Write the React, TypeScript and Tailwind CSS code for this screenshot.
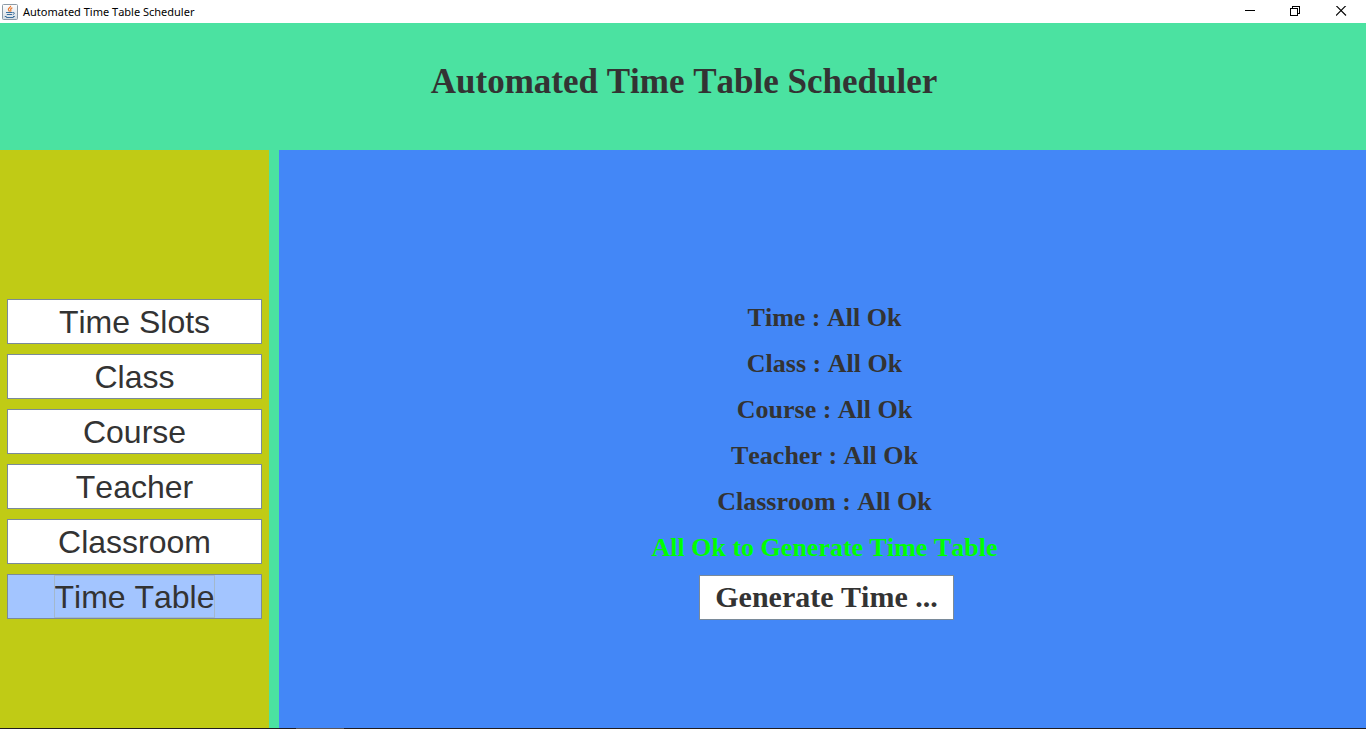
const sections = ["Time Slots", "Class", "Course", "Teacher", "Classroom", "Time Table"];

const checks = [
  "Time : All Ok",
  "Class : All Ok",
  "Course : All Ok",
  "Teacher : All Ok",
  "Classroom : All Ok",
];

function JavaIcon() {
  return (
    <svg width="16" height="16" viewBox="0 0 16 16" fill="none" aria-hidden="true">
      <defs>
        <linearGradient id="tile" x1="0" y1="0" x2="0" y2="1">
          <stop offset="0" stopColor="#ffffff" />
          <stop offset="1" stopColor="#d3dbe2" />
        </linearGradient>
      </defs>
      <rect x="0.5" y="0.5" width="15" height="15" rx="1" fill="url(#tile)" stroke="#8c9aa6" />
      <path d="M8.6 1.8C9.2 3.4 5.8 4 6.4 5.6C6.6 6.3 7.3 6.8 7.4 7.6M10.4 3.8C8.8 4.5 8.4 5.3 8.8 6.1C9 6.6 8.9 7.1 8.5 7.6" stroke="#e8782c" strokeWidth="1.2" />
      <path d="M4 8.5H10.6M4.8 10.5H10M10.8 8.6C12.8 8.1 13 9.8 10.8 10.6M2.8 12.5H4.6M11 12.5H12.8M4.2 13.5H11.6" stroke="#3b6e9c" strokeWidth="1" />
    </svg>
  );
}

function TitleBar() {
  return (
    <div className="flex h-[23px] shrink-0 items-center justify-between bg-white">
      <div className="flex items-center gap-1 pl-[2px]">
        <JavaIcon />
        <span className="pl-px font-['Noto_Sans','Open_Sans',sans-serif] text-[11px] leading-4 text-black">
          Automated Time Table Scheduler
        </span>
      </div>
      <div className="flex pr-[2px] text-black">
        <button type="button" aria-label="Minimize" className="flex h-[23px] w-[45px] items-center justify-center">
          <svg width="11" height="11" viewBox="0 0 11 11" shapeRendering="crispEdges">
            <path d="M0 4.5H10" stroke="currentColor" />
          </svg>
        </button>
        <button type="button" aria-label="Restore" className="flex h-[23px] w-[45px] items-center justify-center">
          <svg width="11" height="11" viewBox="0 0 11 11" fill="none" stroke="currentColor" shapeRendering="crispEdges">
            <path d="M0.5 2.5H7.5V9.5H0.5ZM2.5 2.5V0.5H9.5V7.5H7.5" />
          </svg>
        </button>
        <button type="button" aria-label="Close" className="flex h-[23px] w-[46px] items-center justify-center">
          <svg width="11" height="11" viewBox="0 0 11 11" stroke="currentColor">
            <path d="M0 -0.5L10 9.5M10 -0.5L0 9.5" strokeWidth="1.1" />
          </svg>
        </button>
      </div>
    </div>
  );
}

export default function App() {
  const active = "Time Table";
  return (
    <div className="flex min-h-screen flex-col bg-[#4be2a1] text-[#333333] [font-kerning:none]">
      <TitleBar />
      <header className="flex h-[127px] shrink-0 items-center justify-center pb-[10px] pl-[2px]">
        <h1 className="font-['Liberation_Serif',serif] text-[35px] leading-10 font-bold">
          Automated Time Table Scheduler
        </h1>
      </header>
      <div className="flex grow gap-[10px]">
        <nav className="flex w-[269px] shrink-0 flex-col gap-[10px] bg-[#c0cb15] px-[7px] pt-[149px]">
          {sections.map((name) => (
            <button
              key={name}
              type="button"
              className={`flex h-[45px] items-center justify-center border border-[#7a8a99] font-['Liberation_Sans',sans-serif] text-[32px] leading-9 ${
                name === active ? "bg-[#a3c5ff]" : "bg-white"
              }`}
            >
              <span
                className={
                  name === active
                    ? "flex h-[43px] items-center outline outline-[#a3b8cc] -outline-offset-1"
                    : "flex h-[43px] items-center"
                }
              >
                {name}
              </span>
            </button>
          ))}
        </nav>
        <main className="flex grow flex-col items-center bg-[#4387f7] pt-[145px] pl-2 font-['Liberation_Serif',serif] font-bold">
          <ul className="pr-1 text-center text-[26px] leading-[46px]">
            {checks.map((line) => (
              <li key={line}>{line}</li>
            ))}
            <li className="text-[#00ff00]">All Ok to Generate Time Table</li>
          </ul>
          <button
            type="button"
            className="mt-1 h-[45px] w-[255px] border border-[#7a8a99] bg-white pb-[2px] text-[30px] leading-9"
          >
            Generate Time ...
          </button>
        </main>
      </div>
      <div className="flex h-px shrink-0 bg-[#201c20] pl-[296px]">
        <div className="h-px w-12 bg-[#5a565a]" />
      </div>
    </div>
  );
}
